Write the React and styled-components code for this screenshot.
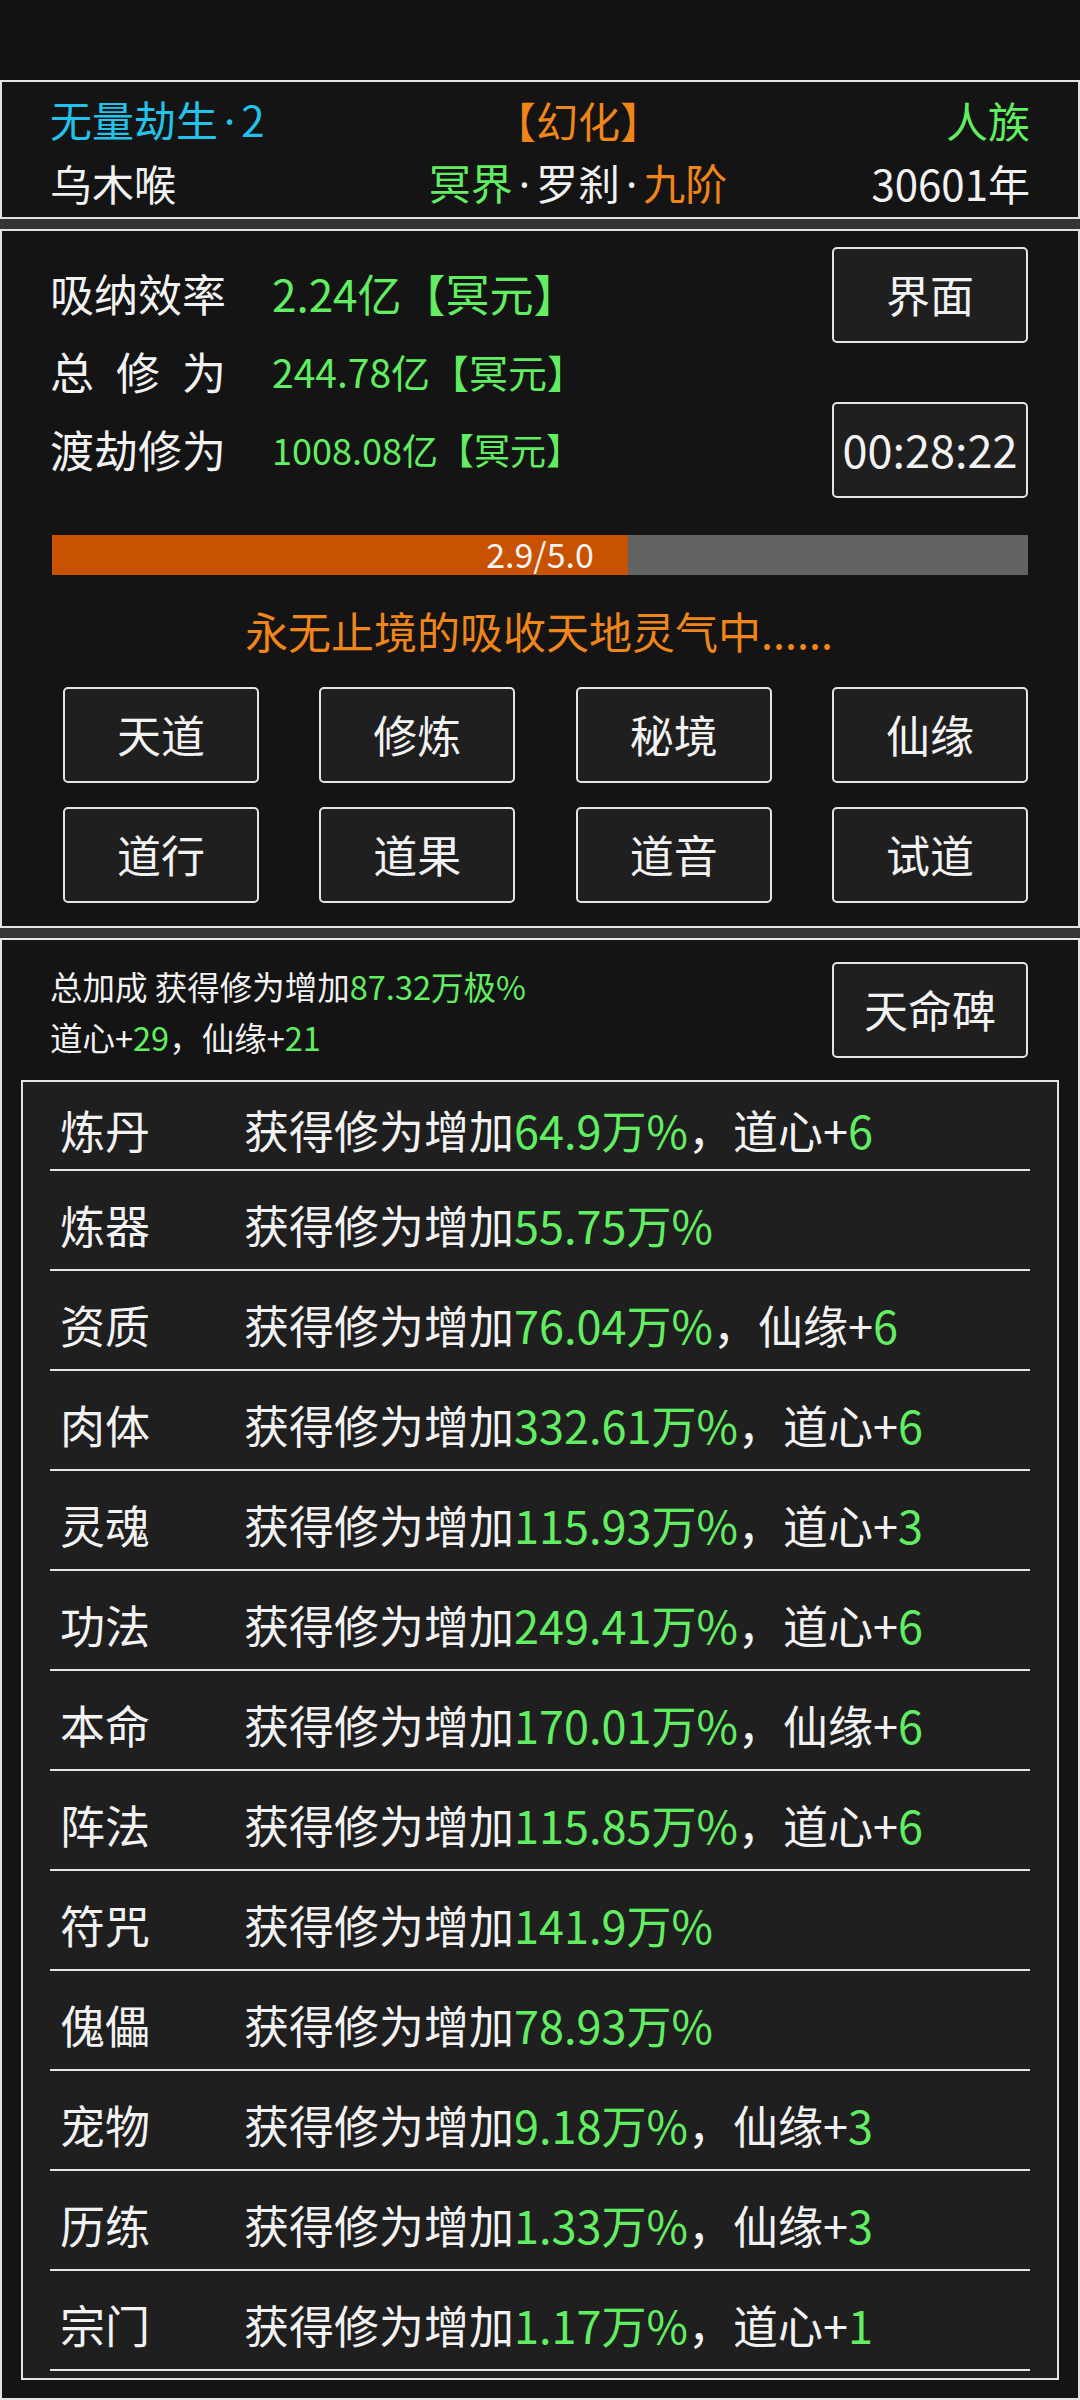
import React from "react";
import styled, { createGlobalStyle } from "styled-components";

const C = {
  white: "#f2f2f2",
  green: "#62ee62",
  cyan: "#22c2ea",
  orange: "#f0851a",
  line: "#e4e4e4",
};

const Global = createGlobalStyle`
  html, body { margin: 0; padding: 0; background: #121212; }
  body {
    font-family: "Noto Sans CJK SC", "Noto Sans", sans-serif;
    color: ${C.white};
  }
  * { box-sizing: border-box; }
`;

const Page = styled.div`
  width: 1080px;
  height: 2400px;
  overflow: hidden;
  background: #121212;
  display: flex;
  flex-direction: column;
`;

const StatusBar = styled.div`
  height: 80px;
  flex: none;
  background: #121212;
`;

const Panel = styled.section`
  flex: none;
  background: #141414;
  border: 2px solid ${C.line};
`;

const Gap = styled.div`
  flex: none;
  height: 10px;
  background: #353535;
`;

const T = styled.span`
  color: ${(p) => p.$c || C.white};
`;

const Dot = styled.span`
  font-family: "Noto Sans", sans-serif;
  padding: 0 6px;
`;

/* ---------- header panel ---------- */
const HeadPanel = styled(Panel)`
  height: 139px;
  padding: 5px 48px 0;
`;

const HeadRow = styled.div`
  display: grid;
  grid-template-columns: 368px 320px 1fr;
  align-items: center;
  height: 63px;
  font-size: 42px;
  line-height: 63px;
  white-space: nowrap;
`;

const Cell = styled.div`
  text-align: ${(p) => p.$align || "left"};
`;

/* ---------- cultivation panel ---------- */
const MainPanel = styled(Panel)`
  height: 699px;
  padding: 16px 50px 0 48px;
  display: flex;
  flex-direction: column;
`;

const TopSection = styled.div`
  display: flex;
  justify-content: space-between;
  align-items: flex-start;
`;

const Stats = styled.div`
  padding-top: 7px;
  display: flex;
  flex-direction: column;
`;

const StatRow = styled.div`
  display: flex;
  align-items: center;
  height: 78px;
  white-space: nowrap;
`;

const StatLabel = styled.div`
  width: 176px;
  margin-right: 46px;
  font-size: 44px;
  text-align: justify;
  text-align-last: justify;
`;

const StatValue = styled.div`
  color: ${C.green};
  font-size: ${(p) => p.$size}px;
`;

const SideButtons = styled.div`
  display: flex;
  flex-direction: column;
  gap: 59px;
`;

const Btn = styled.div`
  width: 196px;
  height: 96px;
  flex: none;
  display: flex;
  align-items: center;
  justify-content: center;
  background: #1f1f1f;
  border: 2px solid ${C.line};
  border-radius: 5px;
  font-size: ${(p) => p.$size || 44}px;
  color: ${C.white};
  white-space: nowrap;
  padding-bottom: 3px;
`;

const Bar = styled.div`
  position: relative;
  margin-top: 37px;
  margin-left: 2px;
  height: 40px;
  background: #636363;
  display: flex;
`;

const BarFill = styled.div`
  height: 100%;
  background: #c85200;
`;

const BarText = styled.div`
  position: absolute;
  inset: 0;
  display: flex;
  align-items: center;
  justify-content: center;
  font-size: 34px;
  color: #f4f4f4;
  line-height: 1;
  padding-bottom: 2px;
`;

const Status = styled.div`
  margin-top: 25px;
  height: 60px;
  line-height: 60px;
  text-align: center;
  font-size: 43px;
  color: ${C.orange};
`;

const BtnGrid = styled.div`
  margin-top: 27px;
  padding-left: 13px;
  display: flex;
  flex-direction: column;
  gap: 24px;
`;

const BtnRow = styled.div`
  display: flex;
  justify-content: space-between;
`;

/* ---------- bonus panel ---------- */
const BonusPanel = styled(Panel)`
  flex: 1;
  padding: 22px 0 18px;
  display: flex;
  flex-direction: column;
`;

const BonusHead = styled.div`
  display: flex;
  justify-content: space-between;
  align-items: flex-start;
  height: 96px;
  padding: 0 50px 0 48px;
`;

const BonusText = styled.div`
  margin-top: -2px;
  font-size: 32.5px;
  line-height: 51px;
  white-space: nowrap;
`;

const List = styled.div`
  margin: 22px 19px 0;
  border: 2px solid ${C.line};
  background: #1f1f1f;
  padding: 0 27px 7px;
`;

const Row = styled.div`
  display: grid;
  grid-template-columns: 184px 1fr;
  align-items: center;
  height: ${(p) => (p.$first ? 89 : 100)}px;
  padding: 8px 0 0 10px;
  border-bottom: 2px solid ${C.line};
  font-size: 45px;
  white-space: nowrap;
`;

const rows = [
  ["炼丹", "64.9万%", "道心", "6"],
  ["炼器", "55.75万%"],
  ["资质", "76.04万%", "仙缘", "6"],
  ["肉体", "332.61万%", "道心", "6"],
  ["灵魂", "115.93万%", "道心", "3"],
  ["功法", "249.41万%", "道心", "6"],
  ["本命", "170.01万%", "仙缘", "6"],
  ["阵法", "115.85万%", "道心", "6"],
  ["符咒", "141.9万%"],
  ["傀儡", "78.93万%"],
  ["宠物", "9.18万%", "仙缘", "3"],
  ["历练", "1.33万%", "仙缘", "3"],
  ["宗门", "1.17万%", "道心", "1"],
];

const actions = [
  ["天道", "修炼", "秘境", "仙缘"],
  ["道行", "道果", "道音", "试道"],
];

export default function App() {
  const progress = (2.9 / 5.0) * 100 + 1;
  return (
    <Page>
      <Global />
      <StatusBar />
      <HeadPanel>
        <HeadRow>
          <Cell>
            <T $c={C.cyan}>
              无量劫生<Dot>·</Dot>2
            </T>
          </Cell>
          <Cell $align="center"><T $c={C.orange}>【幻化】</T></Cell>
          <Cell $align="right"><T $c={C.green}>人族</T></Cell>
        </HeadRow>
        <HeadRow>
          <Cell>乌木喉</Cell>
          <Cell $align="center">
            <T $c={C.green}>冥界</T>
            <T>
              <Dot>·</Dot>罗刹<Dot>·</Dot>
            </T>
            <T $c={C.orange}>九阶</T>
          </Cell>
          <Cell $align="right">30601年</Cell>
        </HeadRow>
      </HeadPanel>
      <Gap />
      <MainPanel>
        <TopSection>
          <Stats>
            <StatRow>
              <StatLabel>吸纳效率</StatLabel>
              <StatValue $size={44}>2.24亿【冥元】</StatValue>
            </StatRow>
            <StatRow>
              <StatLabel>总修为</StatLabel>
              <StatValue $size={39}>244.78亿【冥元】</StatValue>
            </StatRow>
            <StatRow>
              <StatLabel>渡劫修为</StatLabel>
              <StatValue $size={36}>1008.08亿【冥元】</StatValue>
            </StatRow>
          </Stats>
          <SideButtons>
            <Btn>界面</Btn>
            <Btn $size={45}>00:28:22</Btn>
          </SideButtons>
        </TopSection>
        <Bar>
          <BarFill style={{ width: `${progress}%` }} />
          <BarText>2.9/5.0</BarText>
        </Bar>
        <Status>永无止境的吸收天地灵气中......</Status>
        <BtnGrid>
          {actions.map((r, i) => (
            <BtnRow key={i}>
              {r.map((a) => (
                <Btn key={a}>{a}</Btn>
              ))}
            </BtnRow>
          ))}
        </BtnGrid>
      </MainPanel>
      <Gap />
      <BonusPanel>
        <BonusHead>
          <BonusText>
            <div>
              总加成 获得修为增加<T $c={C.green}>87.32万极%</T>
            </div>
            <div>
              道心+<T $c={C.green}>29</T>，仙缘+<T $c={C.green}>21</T>
            </div>
          </BonusText>
          <Btn>天命碑</Btn>
        </BonusHead>
        <List>
          {rows.map(([name, pct, attr, n], i) => (
            <Row key={name} $first={i === 0}>
              <span>{name}</span>
              <span>
                获得修为增加<T $c={C.green}>{pct}</T>
                {attr && (
                  <>
                    ，{attr}+<T $c={C.green}>{n}</T>
                  </>
                )}
              </span>
            </Row>
          ))}
        </List>
      </BonusPanel>
    </Page>
  );
}
